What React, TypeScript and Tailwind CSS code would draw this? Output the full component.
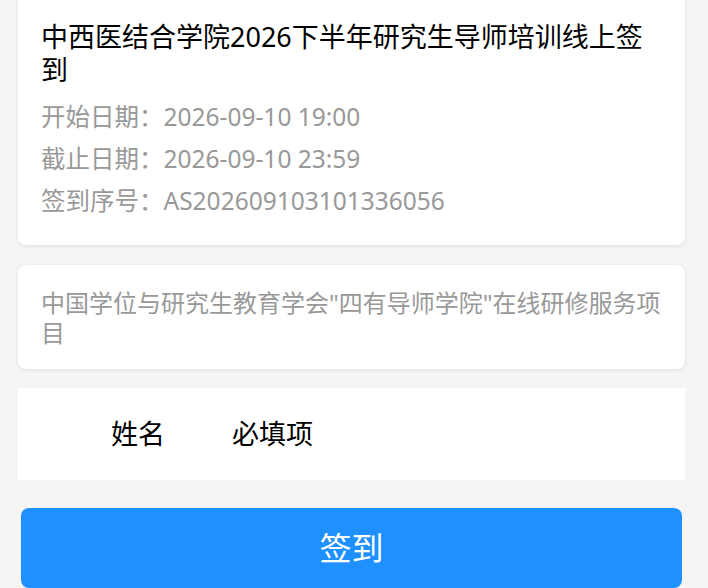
const font = "font-['Noto_Sans','Noto_Sans_CJK_SC',sans-serif]"

const App = () => {
  return (
    <div className={`min-h-screen bg-[#f5f5f5] overflow-hidden ${font}`}>
      <div className="-mt-[12px] pr-[5px] flex flex-col">
        <div className="mx-[18px] rounded-lg bg-white shadow-[0_1px_4px_rgba(0,0,0,0.1)] pt-[32px] pb-[23px] px-[23px]">
          <h1 className="text-[27px] leading-[33px] text-black">
            中西医结合学院2026下半年研究生导师培训线上签
            <br />到
          </h1>
          <div className="mt-[10px] text-[24.5px] leading-[42px] text-[#999]">
            <div>开始日期：2026-09-10 19:00</div>
            <div>截止日期：2026-09-10 23:59</div>
            <div>签到序号：AS20260910310133605​6</div>
          </div>
        </div>

        <div className="mx-[18px] mt-[20px] rounded-lg bg-white shadow-[0_1px_4px_rgba(0,0,0,0.1)] pt-[23px] pb-[21px] px-[23px]">
          <p className="text-[24px] leading-[30px] text-[#999]">中国学位与研究生教育学会"四有导师学院"在线研修服务项目</p>
        </div>

        <div className="mx-[18px] mt-[19px] h-[92px] bg-white flex items-center pl-[93px]">
          <span className="text-[27px] text-black w-[121px]">姓名</span>
          <span className="text-[27px] text-black">必填项</span>
        </div>

        <button className="mx-[21px] mt-[28px] h-[80px] rounded-lg bg-[#1e90ff] text-white text-[32px]">签到</button>
      </div>
    </div>
  )
}

export default App
